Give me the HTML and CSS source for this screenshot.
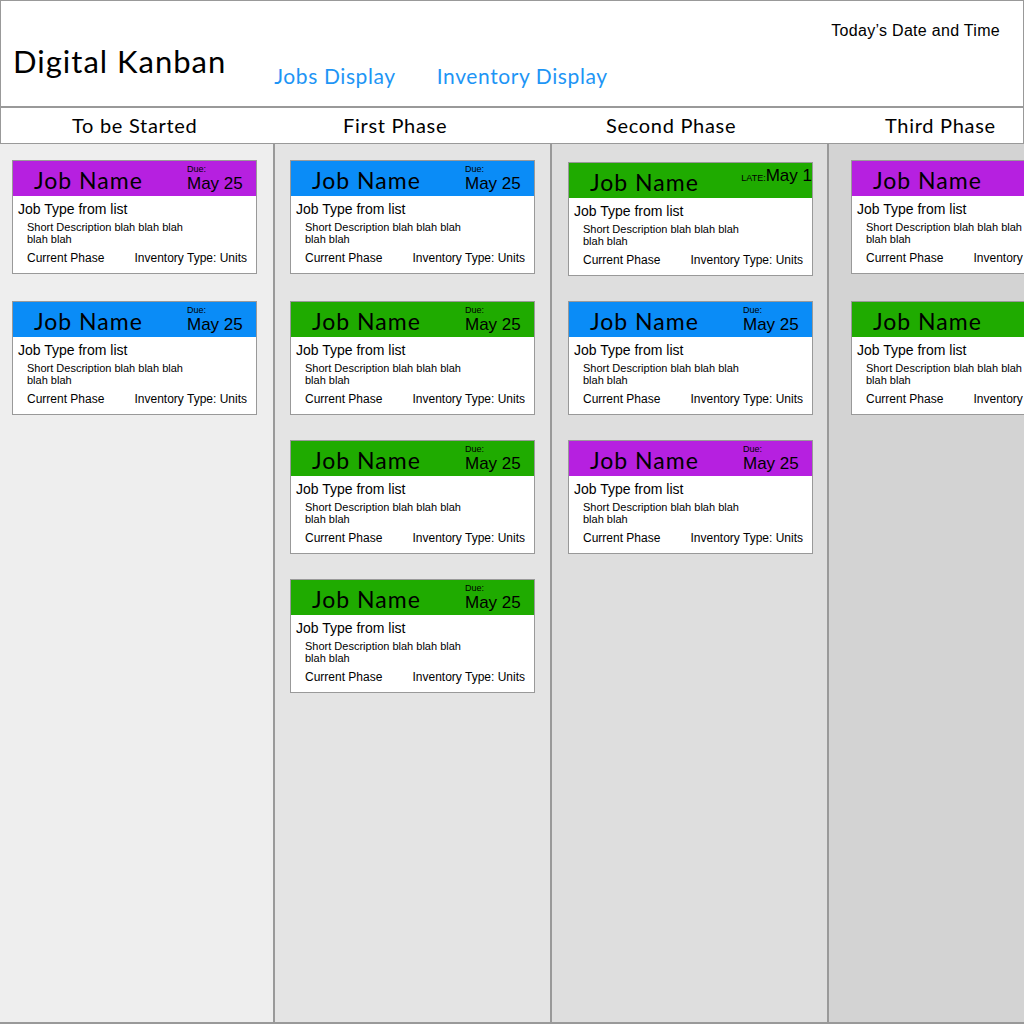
FILE: index.html
```html
<!DOCTYPE html>
<html lang="en">
<head>
<meta charset="utf-8">
<title>Digital Kanban</title>
<link rel="stylesheet" href="styles.css">
</head>
<body>
<header class="top">
  <h1 class="brand">Digital Kanban</h1>
  <nav class="nav">
    <a class="nav-link" href="#">Jobs Display</a>
    <a class="nav-link" href="#">Inventory Display</a>
  </nav>
  <div class="clock">Today’s Date and Time</div>
</header>
<div class="phases">
  <div class="phase phase-1">To be Started</div>
  <div class="phase phase-2">First Phase</div>
  <div class="phase phase-3">Second Phase</div>
  <div class="phase phase-4">Third Phase</div>
</div>
<main class="board">
  <section class="col col-1">
    <article class="card">
      <div class="card-head purple"><span class="job">Job Name</span><div class="due"><span class="due-label">Due:</span><span class="due-date">May 25</span></div></div>
      <div class="card-body"><div class="type">Job Type from list</div><p class="desc">Short Description blah blah blah blah blah</p><div class="foot"><span>Current Phase</span><span>Inventory Type: Units</span></div></div>
    </article>
    <article class="card">
      <div class="card-head blue"><span class="job">Job Name</span><div class="due"><span class="due-label">Due:</span><span class="due-date">May 25</span></div></div>
      <div class="card-body"><div class="type">Job Type from list</div><p class="desc">Short Description blah blah blah blah blah</p><div class="foot"><span>Current Phase</span><span>Inventory Type: Units</span></div></div>
    </article>
  </section>
  <section class="col col-2">
    <article class="card">
      <div class="card-head blue"><span class="job">Job Name</span><div class="due"><span class="due-label">Due:</span><span class="due-date">May 25</span></div></div>
      <div class="card-body"><div class="type">Job Type from list</div><p class="desc">Short Description blah blah blah blah blah</p><div class="foot"><span>Current Phase</span><span>Inventory Type: Units</span></div></div>
    </article>
    <article class="card">
      <div class="card-head green"><span class="job">Job Name</span><div class="due"><span class="due-label">Due:</span><span class="due-date">May 25</span></div></div>
      <div class="card-body"><div class="type">Job Type from list</div><p class="desc">Short Description blah blah blah blah blah</p><div class="foot"><span>Current Phase</span><span>Inventory Type: Units</span></div></div>
    </article>
    <article class="card">
      <div class="card-head green"><span class="job">Job Name</span><div class="due"><span class="due-label">Due:</span><span class="due-date">May 25</span></div></div>
      <div class="card-body"><div class="type">Job Type from list</div><p class="desc">Short Description blah blah blah blah blah</p><div class="foot"><span>Current Phase</span><span>Inventory Type: Units</span></div></div>
    </article>
    <article class="card">
      <div class="card-head green"><span class="job">Job Name</span><div class="due"><span class="due-label">Due:</span><span class="due-date">May 25</span></div></div>
      <div class="card-body"><div class="type">Job Type from list</div><p class="desc">Short Description blah blah blah blah blah</p><div class="foot"><span>Current Phase</span><span>Inventory Type: Units</span></div></div>
    </article>
  </section>
  <section class="col col-3">
    <article class="card card-late">
      <div class="card-head green"><span class="job">Job Name</span><div class="late"><span class="late-label">LATE:</span><span class="late-date">May 1</span></div></div>
      <div class="card-body"><div class="type">Job Type from list</div><p class="desc">Short Description blah blah blah blah blah</p><div class="foot"><span>Current Phase</span><span>Inventory Type: Units</span></div></div>
    </article>
    <article class="card">
      <div class="card-head blue"><span class="job">Job Name</span><div class="due"><span class="due-label">Due:</span><span class="due-date">May 25</span></div></div>
      <div class="card-body"><div class="type">Job Type from list</div><p class="desc">Short Description blah blah blah blah blah</p><div class="foot"><span>Current Phase</span><span>Inventory Type: Units</span></div></div>
    </article>
    <article class="card">
      <div class="card-head purple"><span class="job">Job Name</span><div class="due"><span class="due-label">Due:</span><span class="due-date">May 25</span></div></div>
      <div class="card-body"><div class="type">Job Type from list</div><p class="desc">Short Description blah blah blah blah blah</p><div class="foot"><span>Current Phase</span><span>Inventory Type: Units</span></div></div>
    </article>
  </section>
  <section class="col col-4">
    <article class="card">
      <div class="card-head purple"><span class="job">Job Name</span><div class="due"><span class="due-label">Due:</span><span class="due-date">May 25</span></div></div>
      <div class="card-body"><div class="type">Job Type from list</div><p class="desc">Short Description blah blah blah blah blah</p><div class="foot"><span>Current Phase</span><span>Inventory Type: Units</span></div></div>
    </article>
    <article class="card">
      <div class="card-head green"><span class="job">Job Name</span><div class="due"><span class="due-label">Due:</span><span class="due-date">May 25</span></div></div>
      <div class="card-body"><div class="type">Job Type from list</div><p class="desc">Short Description blah blah blah blah blah</p><div class="foot"><span>Current Phase</span><span>Inventory Type: Units</span></div></div>
    </article>
  </section>
</main>
</body>
</html>
```
FILE: styles.css
```css
* { box-sizing: border-box; }
html, body {
  margin: 0;
  padding: 0;
  width: 1024px;
  height: 1024px;
  overflow: hidden;
  background: #ffffff;
  font-family: "Liberation Sans", Arial, sans-serif;
  color: #000;
}

.top {
  height: 108px;
  border: 1px solid #999;
  border-bottom: 2px solid #999;
  display: flex;
  align-items: flex-start;
}
.brand {
  margin: 42px 0 0 12px;
  font-family: "Lato", sans-serif;
  font-weight: 400;
  font-size: 31px;
  letter-spacing: 1px;
  line-height: 36px;
}
.nav {
  display: flex;
  gap: 41px;
  margin: 61px 0 0 48px;
}
.nav-link {
  font-family: "Lato", sans-serif;
  font-size: 21px;
  line-height: 28px;
  letter-spacing: 0.6px;
  color: #1e95f5;
  text-decoration: none;
}
.clock {
  margin: 20px 0 0 auto;
  padding-right: 23px;
  font-size: 16px;
  line-height: 20px;
  letter-spacing: 0.3px;
}

.phases {
  display: flex;
  height: 36px;
  border-left: 1px solid #999;
  border-right: 1px solid #999;
  border-bottom: 1px solid #999;
  font-family: "Lato", sans-serif;
  font-size: 20px;
  letter-spacing: 0.7px;
  line-height: 34px;
}
.phase { white-space: nowrap; flex: none; }
.phase-1 { width: 273px; padding-left: 71px; }
.phase-2 { width: 278px; padding-left: 69px; }
.phase-3 { width: 277px; padding-left: 54px; }
.phase-4 { flex: 1; padding-left: 56px; }

.board {
  display: flex;
  height: 880px;
  border-bottom: 2px solid #999;
}
.col {
  flex: none;
  display: flex;
  flex-direction: column;
  gap: 25px;
  padding-top: 16px;
  border-right: 2px solid #999;
}
.col-1 { width: 275px; background: #eeeeee; padding-left: 12px; }
.col-2 { width: 277px; background: #e4e4e4; padding-left: 15px; }
.col-3 { width: 277px; background: #dedede; padding-left: 16px; }
.col-4 { flex: 1 0 auto; width: 195px; background: #d3d3d3; padding-left: 22px; border-right: none; }

.card {
  width: 245px;
  height: 114px;
  flex: none;
  border: 1px solid #999;
  background: #fff;
  display: flex;
  flex-direction: column;
}
.card:first-child { margin-bottom: 2px; }
.card.card-late { margin-top: 2px; margin-bottom: 0; }

.card-head {
  height: 35px;
  display: flex;
  align-items: flex-start;
}
.purple { background: #b620e0; }
.blue { background: #0a8cf7; }
.green { background: #1fab00; }

.job {
  font-family: "Lato", sans-serif;
  font-size: 23px;
  letter-spacing: 1px;
  line-height: 26px;
  margin: 6px 0 0 21px;
}
.due {
  margin-left: auto;
  margin-right: 12px;
  display: flex;
  flex-direction: column;
  width: 57px;
  flex: none;
}
.due-label {
  font-size: 9px;
  line-height: 10px;
  margin-top: 3px;
}
.due-date {
  font-size: 17px;
  line-height: 20px;
}
.late {
  margin-left: auto;
  display: flex;
  align-items: baseline;
  margin-top: 3px;
  white-space: nowrap;
}
.late-label { font-size: 9px; }
.late-date { font-size: 17px; line-height: 20px; }

.card-body {
  flex: 1;
  padding: 5px 9px 0 5px;
}
.type {
  font-size: 14px;
  line-height: 16px;
}
.desc {
  margin: 4px 0 0 9px;
  width: 170px;
  font-size: 11px;
  line-height: 12px;
}
.foot {
  display: flex;
  justify-content: space-between;
  margin: 6px 0 0 9px;
  font-size: 12px;
  line-height: 14px;
  white-space: nowrap;
}
```
